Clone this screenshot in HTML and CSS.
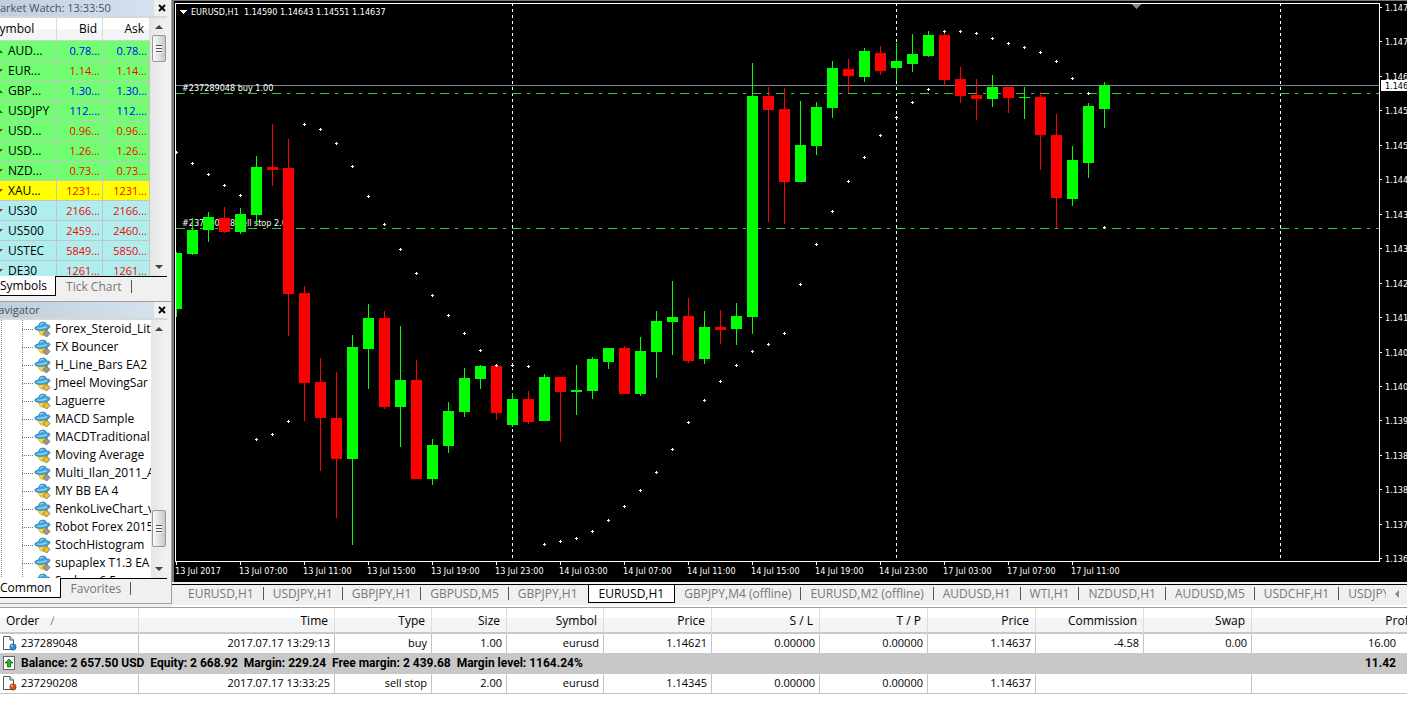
FILE: index.html
```html
<!DOCTYPE html>
<html lang="en">
<head>
  <meta charset="UTF-8" />
  <meta name="viewport" content="width=device-width, initial-scale=1.0"/>
  <title>EURUSD,H1</title>
  <link rel="stylesheet" href="styles.css">
</head>
<body>

<svg class="defs" aria-hidden="true">
  <symbol id="expert" viewBox="0 0 17 16">
    <path d="M4 8 Q5 14 9 14.500 Q13 14 13.500 8 Z" fill="#f5d83a" stroke="#b99b22" stroke-width=".6"/>
    <path d="M.7 7.500 Q1 5.200 4.500 5 Q5 1 9 1 Q12 1 12.500 4 Q16 3.600 16 5.600 Q15 8.600 8.500 9.300 Q1.500 9.600 .7 7.500Z" fill="#45a5dc" stroke="#2277ad" stroke-width=".8"/>
    <path d="M6 3.500 Q7 2 9.500 2.200 M3 7 Q8 8 13 5.500" fill="none" stroke="#a5ddf8" stroke-width="1.100"/>
    <path d="M12.500 9 L16 12.500 L12.500 16 L9 12.500 Z" fill="currentColor" stroke="#6b6244" stroke-width=".8"/>
  </symbol>
  <symbol id="page" viewBox="0 0 16 16">
    <path d="M2.500 1.500 H9 L12.500 5 V14.500 H2.500 Z" fill="#fff" stroke="#555"/>
    <path d="M9 1.500 V5 H12.500" fill="#ddd" stroke="#555"/>
    <circle cx="12" cy="12" r="3.200" fill="currentColor" stroke="#444" stroke-width=".5"/>
    <circle cx="11" cy="11" r="1" fill="#fff" opacity=".6"/>
  </symbol>
  <symbol id="balance" viewBox="0 0 16 16">
    <rect x="2.500" y="1.500" width="11" height="13" fill="#fff" stroke="#666"/>
    <path d="M8 4 L12 8 H9.500 V12 H6.500 V8 H4 Z" fill="#27b327" stroke="#08700c" stroke-width=".8"/>
  </symbol>
  <symbol id="close" viewBox="0 0 8 8">
    <path d="M1 1 L7 7 M7 1 L1 7" stroke="#000" stroke-width="1.800"/>
  </symbol>
</svg>

<div class="workspace">
  <aside class="sidebar">
    <section class="panel watch">
      <header class="panel-title"><h2>Market Watch: 13:33:50</h2><button aria-label="Close"><svg><use href="#close"/></svg></button></header>
      <div class="panel-body">
        <table class="quotes">
          <thead><tr><th>Symbol</th><th>Bid</th><th>Ask</th></tr></thead>
          <tbody id="quotes"></tbody>
        </table>
        <div class="scrollbar"><i class="arrow up"></i><i class="thumb"></i><i class="arrow down"></i></div>
      </div>
      <nav class="panel-tabs"><button class="active">Symbols</button><button>Tick Chart</button></nav>
    </section>
    <section class="panel navigator">
      <header class="panel-title"><h2>Navigator</h2><button aria-label="Close"><svg><use href="#close"/></svg></button></header>
      <div class="panel-body">
        <ul class="tree" id="tree"></ul>
        <div class="scrollbar"><i class="arrow up"></i><i class="thumb low"></i><i class="arrow down"></i></div>
      </div>
      <nav class="panel-tabs"><button class="active">Common</button><button>Favorites</button></nav>
    </section>
  </aside>

  <main class="main">
    <div class="chart"><svg id="chart"></svg></div>
    <div class="chart-tabs">
      <nav>
        <button>EURUSD,H1</button>
        <button>USDJPY,H1</button>
        <button>GBPJPY,H1</button>
        <button>GBPUSD,M5</button>
        <button class="before">GBPJPY,H1</button>
        <button class="active">EURUSD,H1</button>
        <button>GBPJPY,M4 (offline)</button>
        <button>EURUSD,M2 (offline)</button>
        <button>AUDUSD,H1</button>
        <button>WTI,H1</button>
        <button>NZDUSD,H1</button>
        <button>AUDUSD,M5</button>
        <button>USDCHF,H1</button>
        <button>USDJPY,M5</button>
      </nav>
      <button class="scroll-left" aria-label="Scroll tabs left"></button>
    </div>
  </main>
</div>

<section class="terminal">
  <table class="orders">
    <colgroup>
      <col class="c-order"><col class="c-time"><col class="c-type"><col class="c-size"><col class="c-type">
      <col class="c-price"><col class="c-price"><col class="c-price"><col class="c-price"><col class="c-price"><col class="c-price"><col class="c-profit">
    </colgroup>
    <thead>
      <tr><th>Order <span class="sort">∕</span></th><th>Time</th><th>Type</th><th>Size</th><th>Symbol</th><th>Price</th><th>S / L</th><th>T / P</th><th>Price</th><th>Commission</th><th>Swap</th><th>Profit</th></tr>
    </thead>
    <tbody>
      <tr><td><svg class="blue"><use href="#page"/></svg>237289048</td><td>2017.07.17 13:29:13</td><td>buy</td><td>1.00</td><td>eurusd</td><td>1.14621</td><td>0.00000</td><td>0.00000</td><td>1.14637</td><td>-4.58</td><td>0.00</td><td>16.00</td></tr>
      <tr class="balance"><td colspan="11"><svg><use href="#balance"/></svg>Balance: 2 657.50 USD&nbsp; Equity: 2 668.92&nbsp; Margin: 229.24&nbsp; Free margin: 2 439.68&nbsp; Margin level: 1164.24%</td><td>11.42</td></tr>
      <tr><td><svg class="red"><use href="#page"/></svg>237290208</td><td>2017.07.17 13:33:25</td><td>sell stop</td><td>2.00</td><td>eurusd</td><td>1.14345</td><td>0.00000</td><td>0.00000</td><td>1.14637</td><td colspan="2"></td><td></td></tr>
    </tbody>
  </table>
</section>

<script src="chart.js"></script>
</body>
</html>
```
FILE: styles.css
```css
:root {
  --ui: "Open Sans", "Noto Sans", sans-serif;
  --face: #f0f0f0;
  --line: #a0a0a0;
  --grid: #c4c4c4;
}

* {
  margin: 0;
  padding: 0;
  box-sizing: border-box;
}

body {
  font-family: var(--ui);
  font-size: 12px;
  line-height: 18px;
  color: #000;
  background: #fff;
  overflow: hidden;
}

button {
  font: inherit;
  color: inherit;
  background: none;
  border: 0;
}

table {
  border-collapse: separate;
  border-spacing: 0;
  table-layout: fixed;
}

.defs {
  position: absolute;
  width: 0;
  height: 0;
}

.workspace {
  display: flex;
  background: var(--face);
  border-bottom: 1px solid var(--line);
}

/* left docked panels, partly scrolled out of the window */
.sidebar {
  flex: none;
  width: 184px;
  margin-left: -12px;
  padding-bottom: 3px;
}

.panel {
  padding: 0 4px 4px 0;
  border-right: 1px solid var(--line);
  border-bottom: 1px solid var(--line);
}

.panel-title {
  display: flex;
  justify-content: space-between;
  height: 18px;
  padding-right: 1px;
  border-bottom: 2px solid #d8d8d8;
}

.panel-title h2 {
  flex: 1;
  margin-right: 4px;
  padding-left: 2px;
  font-size: 11px;
  font-weight: 400;
  line-height: 16px;
  color: #44525e;
  background: linear-gradient(90deg, #bfcddb, #d5e1ee);
}

.panel-title button {
  width: 8px;
}

.panel-title svg {
  display: block;
  width: 8px;
  height: 8px;
}

.panel-body {
  display: flex;
  height: 258px;
  overflow: hidden;
  background: #fff;
}

.quotes {
  width: 162px;
  height: max-content;
}

.quotes th {
  height: 23px;
  padding-right: 5px;
  font-weight: 400;
  text-align: right;
  background: linear-gradient(#fff 50%, #f3f4f6 50%);
  border-right: 1px solid #dcdcdc;
  border-bottom: 1px solid #d0d0d0;
}

.quotes th:first-child {
  width: 69px;
  padding-left: 5px;
  text-align: left;
}

.quotes th:nth-child(2) {
  width: 46px;
}

.quotes td {
  height: 20px;
  padding-right: 2px;
  font-size: 11px;
  text-align: right;
  border-right: 1px solid var(--grid);
  border-bottom: 1px solid var(--grid);
}

.quotes td:first-child {
  padding-right: 0;
  font-size: 12px;
  color: #000;
  text-align: left;
  white-space: nowrap;
}

.quotes .green { background: #70ff70; }
.quotes .yellow { background: #ffff00; }
.quotes .cyan { background: #afeeee; }
.quotes .up { color: #0000ff; }
.quotes .down { color: #ff0000; }

.quotes i {
  display: inline-block;
  width: 8px;
  margin: 0 5px 2px 7px;
  border: 4px solid transparent;
}

.quotes .up i {
  border-top: 0;
  border-bottom: 4px solid #0d6b1a;
}

.quotes .down i {
  border-bottom: 0;
  border-top: 4px solid #a32c00;
}

.scrollbar {
  flex: 1;
  display: flex;
  flex-direction: column;
  align-items: center;
  justify-content: space-between;
  padding: 7px 0;
  background: linear-gradient(90deg, #e6e6e6, #f2f2f2);
}

.arrow {
  border: 4px solid transparent;
}

.arrow.up {
  border-top: 0;
  border-bottom: 4px solid #444;
}

.arrow.down {
  border-bottom: 0;
  border-top: 4px solid #444;
}

.thumb {
  width: 14px;
  height: 27px;
  margin-top: 6px;
  margin-bottom: auto;
  background:
    repeating-linear-gradient(#555 0 1px, #f5f5f5 1px 3px) center / 6px 8px no-repeat,
    linear-gradient(90deg, #fafafa, #c9c9cb);
  border: 1px solid #979797;
  border-radius: 2px;
}

.thumb.low {
  height: 37px;
  margin-top: auto;
  margin-bottom: 20px;
}

.panel-tabs {
  display: flex;
  border-top: 1px solid #000;
}

.panel-tabs button {
  height: 20px;
  padding: 0 10px;
  color: #777;
}

.panel-tabs .active {
  margin-top: -1px;
  padding: 0 8px 0 12px;
  color: #000;
  background: #fff;
  border-right: 1px solid #000;
  border-bottom: 1px solid #000;
}

.panel-tabs button:last-child::after,
.chart-tabs nav button::after {
  content: "";
  display: inline-block;
  height: 13px;
  margin-left: 9px;
  border-right: 1px solid #555;
  vertical-align: -2px;
}

.tree {
  width: 163px;
  padding-left: 13px;
  list-style: none;
  overflow: hidden;
}

.tree li {
  display: flex;
  align-items: center;
  height: 18px;
  padding-left: 21px;
  white-space: nowrap;
  background:
    repeating-linear-gradient(#888 0 1px, transparent 1px 2px) 0 0 / 1px 18px no-repeat,
    repeating-linear-gradient(#888 0 1px, transparent 1px 2px) 21px 0 / 1px 18px no-repeat;
}

.tree li::before {
  content: "";
  flex: none;
  width: 11px;
  margin-right: 1px;
  border-top: 1px dotted #777;
}

.tree svg {
  flex: none;
  width: 17px;
  height: 16px;
  margin-right: 4px;
}

.tree .gold { color: #f0bd3c; }
.tree .gray { color: #999; }

.main {
  flex: 1;
  min-width: 0;
  display: flex;
  flex-direction: column;
}

.chart {
  height: 582px;
  background: #000;
  border-top: 1px solid #777;
  border-left: 2px solid #777;
}

.chart svg {
  display: block;
  width: 100%;
  height: 100%;
  font-family: "DejaVu Sans Condensed", "DejaVu Sans", sans-serif;
  font-size: 9px;
  fill: #fff;
  shape-rendering: crispEdges;
}

.chart-tabs {
  display: flex;
  height: 23px;
  margin-top: 2px;
  padding-left: 7px;
  border-top: 1px solid #000;
  border-bottom: 2px solid #fff;
}

.chart-tabs nav {
  flex: 1;
  display: flex;
  overflow: hidden;
}

.chart-tabs nav button {
  flex: none;
  height: 18px;
  padding-left: 9px;
  color: #777;
  white-space: nowrap;
}

.chart-tabs nav .before::after {
  border-color: transparent;
}

.chart-tabs nav .active {
  padding: 0 10px;
  color: #000;
  background: #fff;
  border: solid #000;
  border-width: 0 1px 1px;
}

.chart-tabs nav .active::after {
  content: none;
}

.chart-tabs .scroll-left {
  width: 21px;
  height: 18px;
}

.scroll-left::after {
  content: "";
  display: block;
  width: 7px;
  margin-left: 2px;
  border: 4px solid transparent;
  border-left: 0;
  border-right: 4px solid #888;
}

/* terminal, its last column runs past the window edge */
.terminal {
  overflow: hidden;
}

.orders {
  width: 1423px;
}

.c-order { width: 139px; }
.c-time { width: 196px; }
.c-type { width: 97px; }
.c-size { width: 75px; }
.c-price { width: 108px; }
.c-profit { width: 171px; }

.orders th {
  height: 26px;
  padding: 2px 6px 0 0;
  font-weight: 400;
  text-align: right;
  background: linear-gradient(#fff 40%, #f3f4f6 40%);
  border-right: 1px solid #dedede;
  border-bottom: 2px solid #c8c8c8;
}

.orders th:first-child {
  padding-left: 6px;
  text-align: left;
}

.sort {
  margin-left: 8px;
  color: #888;
}

.orders td {
  height: 19px;
  padding: 0 4px 2px 0;
  font-size: 11px;
  line-height: 16px;
  text-align: right;
  border-right: 1px solid var(--grid);
  white-space: nowrap;
}

.orders td:first-child {
  text-align: left;
}

.orders td:last-child {
  padding-right: 26px;
}

.orders tr:last-child td {
  height: 20px;
  border-bottom: 1px solid var(--grid);
}

.orders svg {
  width: 16px;
  height: 16px;
  margin: 0 4px 0 1px;
  vertical-align: top;
}

.orders .blue { color: #1e8fe0; }
.orders .red { color: #e04a10; }

.orders .balance td {
  height: 21px;
  font-family: Roboto, sans-serif;
  font-size: 12px;
  font-weight: 700;
  background: #c8c8c8;
  border-color: #c8c8c8;
}
```
FILE: chart.js
```js
const quotes = [
  ["AUD...", "0.78...", "0.78...", "green up"],
  ["EUR...", "1.14...", "1.14...", "green down"],
  ["GBP...", "1.30...", "1.30...", "green up"],
  ["USDJPY", "112....", "112....", "green up"],
  ["USD...", "0.96...", "0.96...", "green down"],
  ["USD...", "1.26...", "1.26...", "green down"],
  ["NZD...", "0.73...", "0.73...", "green down"],
  ["XAU...", "1231...", "1231...", "yellow down"],
  ["US30", "2166...", "2166...", "cyan down"],
  ["US500", "2459...", "2460...", "cyan down"],
  ["USTEC", "5849...", "5850...", "cyan down"],
  ["DE30", "1261...", "1261...", "cyan down"]
];
document.getElementById("quotes").innerHTML = quotes.map(q =>
  `<tr class="${q[3]}"><td><i></i>${q[0]}</td><td>${q[1]}</td><td>${q[2]}</td></tr>`).join("");

const experts = [
  ["Forex_Steroid_Lite", "gray"], ["FX Bouncer", "gray"], ["H_Line_Bars EA2", "gray"],
  ["Jmeel MovingSar", "gold"], ["Laguerre", "gold"], ["MACD Sample", "gold"],
  ["MACDTraditional", "gray"], ["Moving Average", "gold"], ["Multi_Ilan_2011_A", "gray"],
  ["MY BB EA 4", "gold"], ["RenkoLiveChart_v", "gold"], ["Robot Forex 2015", "gray"],
  ["StochHistogram", "gold"], ["supaplex T1.3 EA a", "gray"], ["Scalper 6.5", "gray"]
];
document.getElementById("tree").innerHTML = experts.map(e =>
  `<li><svg class="${e[1]}"><use href="#expert"/></svg>${e[0]}</li>`).join("");

// direction, high, body top, body bottom, low
const candles = [
  ["u",252,253,309,317],["u",218,230,254,255],["u",212,217,230,242],["d",207,218,232,233],
  ["u",208,214,232,234],["u",156,167,215,225],["d",124,167,170,186],["d",139,168,294,336],
  ["d",286,293,383,421],["d",358,382,418,471],["d",372,418,459,518],["u",335,347,459,545],
  ["u",304,318,349,389],["d",311,318,407,409],["u",326,380,407,447],["d",360,380,479,479],
  ["u",439,445,479,485],["u",402,411,446,453],["u",368,378,412,417],["u",365,366,379,389],
  ["d",366,366,413,420],["u",393,399,425,427],["d",391,399,422,424],["u",374,377,421,421],
  ["d",377,377,392,442],["u",365,390,392,415],["u",357,359,391,399],["u",348,348,362,369],
  ["d",346,348,394,394],["u",337,351,394,396],["u",311,321,352,378],["u",281,317,322,355],
  ["d",298,316,361,363],["u",311,327,359,364],["d",310,327,330,344],["u",303,316,329,345],
  ["u",63,96,317,334],["d",87,96,110,222],["d",88,109,182,224],["u",101,145,182,182],
  ["u",102,107,146,155],["u",61,68,108,118],["d",59,69,76,93],["u",48,51,77,82],
  ["d",46,53,71,75],["u",43,61,68,81],["u",34,54,64,72],["u",31,35,56,57],
  ["d",33,35,80,86],["d",67,79,96,103],["d",79,95,99,120],["u",75,87,99,107],
  ["d",87,87,98,113],["u",87,97,98,119],["d",92,97,135,170],["d",114,135,198,228],
  ["u",146,160,199,206],["u",103,106,163,178],["u",82,85,109,128]
];
// parabolic SAR, one value per bar
const sar = [152,163,174,185,195,439,434,421,124,129,143,166,196,224,249,273,295,315,333,350,365,365,366,
  544,541,538,531,520,506,490,472,449,422,400,381,365,351,344,333,284,244,211,181,157,135,117,102,89,
  31,31,33,38,43,47,52,61,78,93,227];
const times = ["13 Jul 2017", "13 Jul 07:00", "13 Jul 11:00", "13 Jul 15:00", "13 Jul 19:00", "13 Jul 23:00",
  "14 Jul 03:00", "14 Jul 07:00", "14 Jul 11:00", "14 Jul 15:00", "14 Jul 19:00", "14 Jul 23:00",
  "17 Jul 03:00", "17 Jul 07:00", "17 Jul 11:00"];
const prices = ["1.14750", "1.14705", "1.14660", "1.14590", "1.14520", "1.14450", "1.14380", "1.14310", "1.14240",
  "1.14170", "1.14060", "1.14000", "1.13930", "1.13860", "1.13800", "1.13730", "1.13660"];

const chart = document.getElementById("chart");

function rect(x, y, w, h, fill) {
  return `<rect x="${x}" y="${y}" width="${w}" height="${h}" fill="${fill}"/>`;
}

function text(x, y, s, fill) {
  return `<text x="${x}" y="${y}" fill="${fill || "#fff"}">${s}</text>`;
}

function drawChart() {
  const right = chart.clientWidth - 28;
  const left = 1;
  const first = 2;
  let out = "";

  [21, 45, 69].forEach(i => {
    const x = first + i * 16 + 0.5;
    out += `<path d="M${x} 3V561" stroke="#fff" stroke-dasharray="3 3"/>`;
  });
  out += rect(first, 85, right - first, 1, "#778899");
  [93, 228].forEach(y => {
    out += `<path d="M${first} ${y}.5H${right}" stroke="#32cd32" stroke-dasharray="9 6 3 6"/>`;
  });
  out += text(8, 91, "#237289048 buy 1.00") + text(8, 226, "#237290208 sell stop 2.00");

  candles.forEach((c, i) => {
    const x = first + i * 16;
    const color = c[0] === "u" ? "#00ff00" : "#ff0000";
    const bodyX = Math.max(x - 5, first);
    out += rect(x, c[1], 1, c[4] - c[1], color);
    out += rect(bodyX, c[2], x + 6 - bodyX, c[3] - c[2], color);
  });
  sar.forEach((y, i) => {
    const x = first + i * 16;
    out += rect(x - 1, y, 3, 1, "#fff") + rect(x, y - 1, 1, 3, "#fff");
  });

  // frame and axes
  out += `<path d="M${left}.5 3.5H${right}.5V561.5H${left}.5Z" fill="none" stroke="#fff"/>`;
  times.forEach((t, i) => {
    out += rect(first + i * 64, 562, 1, 3, "#fff") + text(left + i * 64, 574, t);
  });
  prices.forEach((p, i) => {
    const y = Math.round(7 + i * 34.45);
    out += rect(right + 1, y, 2, 1, "#fff") + text(right + 6, y + 4, p);
  });
  out += rect(right + 2, 80, 26, 11, "#fff") + text(right + 6, 89, "1.14637", "#000");

  out += `<path d="M5 10H13L9 14Z"/><path d="M957 4H967L962 9Z" fill="#778899"/>`;
  out += text(17, 15, "EURUSD,H1&#160; 1.14590 1.14643 1.14551 1.14637");
  chart.setAttribute("viewBox", `0 1 ${chart.clientWidth} ${chart.clientHeight}`);
  chart.innerHTML = out;
}

drawChart();
window.addEventListener("resize", drawChart);
```
